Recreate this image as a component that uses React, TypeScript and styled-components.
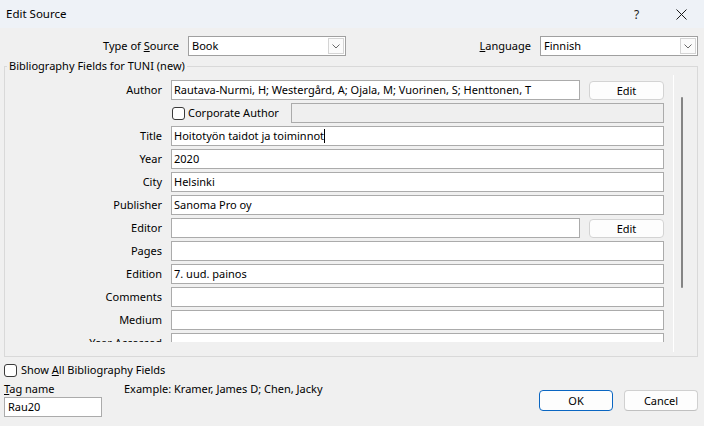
import React from "react";
import styled, { createGlobalStyle } from "styled-components";

const GlobalStyle = createGlobalStyle`
  html, body { margin: 0; padding: 0; background: #f0f0f0; }
  body {
    font-family: "Noto Sans", "Open Sans", sans-serif;
    font-size: 11px;
    color: #000;
  }
  * { box-sizing: border-box; }
`;

const Window = styled.div`
  width: 704px;
  height: 426px;
  background: #f0f0f0;
  display: flex;
  flex-direction: column;
  overflow: hidden;
`;

const TitleBar = styled.div`
  height: 28px;
  flex: none;
  display: flex;
  align-items: center;
  background: #eef2f7;
  padding-left: 6px;
`;

const Title = styled.span`
  flex: 1;
  line-height: 16px;
  font-size: 11.5px;
`;

const CaptionButton = styled.div`
  width: 45px;
  height: 28px;
  display: flex;
  align-items: center;
  justify-content: center;
  font-size: 12px;
  color: #1a1a1a;
`;

const Body = styled.div`
  flex: 1;
  display: flex;
  flex-direction: column;
  padding: 0 6px 0 4px;
`;

const TopRow = styled.div`
  margin-top: 8px;
  height: 20px;
  display: flex;
  align-items: center;
`;

const TopLabel = styled.label<{ $width?: number }>`
  width: ${(p) => (p.$width ? `${p.$width}px` : "auto")};
  text-align: right;
  line-height: 16px;
  margin-right: 9px;
  white-space: nowrap;
`;

const Spacer = styled.div`
  flex: 1;
`;

const Combo = styled.div`
  width: 158px;
  height: 20px;
  border: 1px solid #a0a0a0;
  background: #fff;
  display: flex;
  align-items: stretch;
`;

const ComboText = styled.span`
  flex: 1;
  padding-left: 3px;
  line-height: 18px;
`;

const DropButton = styled.span`
  width: 16px;
  margin: 1px;
  border: 1px solid #d4d4d4;
  background: #fbfbfb;
  display: flex;
  align-items: center;
  justify-content: center;
`;

const Group = styled.fieldset`
  margin: 2px 0 0 0;
  padding: 0;
  border: 1px solid #d9d9d9;
  min-width: 0;
`;

const Legend = styled.legend`
  margin-left: 2px;
  padding: 0 2px;
  line-height: 16px;
`;

const GroupBody = styled.div`
  height: 282px;
  padding-top: 1px;
  display: flex;
`;

const Viewport = styled.div`
  flex: 1;
  height: 267px;
  overflow: hidden;
  padding: 5px 9px 0 0;
  display: flex;
  flex-direction: column;
  gap: 3px;
`;

const ScrollTrack = styled.div`
  width: 24px;
  height: 277px;
  border-left: 1px solid #ffffff;
  padding: 22px 0 0 7px;
`;

const ScrollThumb = styled.div`
  width: 2px;
  height: 191px;
  background: #858585;
  border-radius: 1px;
`;

const FieldRow = styled.div`
  display: grid;
  grid-template-columns: 157px 1fr;
  column-gap: 9px;
  align-items: center;
  height: 20px;
  flex: none;
`;

const FieldLabel = styled.span`
  text-align: right;
  line-height: 16px;
  white-space: nowrap;
`;

const FieldControls = styled.div`
  display: flex;
  align-items: center;
  gap: 9px;
  height: 20px;
`;

const TextBox = styled.div<{ $disabled?: boolean }>`
  flex: 1;
  height: 20px;
  border: 1px solid #ababab;
  background: ${(p) => (p.$disabled ? "#efefef" : "#ffffff")};
  padding-left: 2px;
  line-height: 18px;
  white-space: nowrap;
  overflow: hidden;
`;

const Caret = styled.span`
  display: inline-block;
  width: 1px;
  height: 14px;
  background: #000;
  vertical-align: -3px;
`;

const EditButton = styled.div`
  width: 75px;
  height: 19px;
  border: 1px solid #d3d3d3;
  border-radius: 4px;
  background: #fdfdfd;
  text-align: center;
  line-height: 17px;
`;

const CheckBox = styled.span`
  display: inline-block;
  width: 13px;
  height: 13px;
  border: 1px solid #3a3a3a;
  border-radius: 3px;
  background: #fff;
  flex: none;
`;

const CorporateCheck = styled.div`
  display: flex;
  align-items: center;
  gap: 3px;
  padding-left: 1px;
  width: 111px;
  flex: none;
  line-height: 16px;
  white-space: nowrap;
`;

const ShowAllRow = styled.div`
  margin-top: 6px;
  height: 14px;
  display: flex;
  align-items: center;
  gap: 4px;
  line-height: 16px;
`;

const BottomRow = styled.div`
  display: flex;
  align-items: flex-start;
  margin-top: 4px;
`;

const TagColumn = styled.div`
  width: 98px;
  display: flex;
  flex-direction: column;
`;

const TagLabel = styled.span`
  line-height: 16px;
`;

const TagInput = styled.div`
  height: 20px;
  border: 1px solid #ababab;
  background: #fff;
  padding-left: 3px;
  line-height: 18px;
`;

const Example = styled.span`
  margin-left: 22px;
  line-height: 16px;
  white-space: nowrap;
`;

const DialogButton = styled.div<{ $primary?: boolean }>`
  width: 74px;
  height: 21px;
  margin-top: 9px;
  border: 1px solid ${(p) => (p.$primary ? "#0a66c2" : "#d0d0d0")};
  border-bottom-color: ${(p) => (p.$primary ? "#0a66c2" : "#c0c0c0")};
  border-radius: 4px;
  background: #fdfdfd;
  text-align: center;
  line-height: 19px;
  & + & {
    margin-left: 11px;
  }
`;

const Chevron = () => (
  <svg width="8" height="5" viewBox="0 0 8 5">
    <path d="M0.5 0.5 L4 4 L7.5 0.5" fill="none" stroke="#6a6a6a" strokeWidth="1" />
  </svg>
);

const CloseIcon = () => (
  <svg width="11" height="11" viewBox="0 0 11 11">
    <path d="M0.5 0.5 L10.5 10.5 M10.5 0.5 L0.5 10.5" stroke="#1a1a1a" strokeWidth="1" />
  </svg>
);

type Field = { label: string; value?: string; kind?: "edit" | "caret" };

const fields: Field[] = [
  { label: "Title", value: "Hoitotyön taidot ja toiminnot", kind: "caret" },
  { label: "Year", value: "2020" },
  { label: "City", value: "Helsinki" },
  { label: "Publisher", value: "Sanoma Pro oy" },
  { label: "Editor", value: "", kind: "edit" },
  { label: "Pages", value: "" },
  { label: "Edition", value: "7. uud. painos" },
  { label: "Comments", value: "" },
  { label: "Medium", value: "" },
  { label: "Year Accessed", value: "" },
];

export default function App() {
  return (
    <Window>
      <GlobalStyle />
      <TitleBar>
        <Title>Edit Source</Title>
        <CaptionButton>?</CaptionButton>
        <CaptionButton>
          <CloseIcon />
        </CaptionButton>
      </TitleBar>
      <Body>
        <TopRow>
          <TopLabel $width={175}>
            Type of <u>S</u>ource
          </TopLabel>
          <Combo>
            <ComboText>Book</ComboText>
            <DropButton>
              <Chevron />
            </DropButton>
          </Combo>
          <Spacer />
          <TopLabel>
            <u>L</u>anguage
          </TopLabel>
          <Combo>
            <ComboText>Finnish</ComboText>
            <DropButton>
              <Chevron />
            </DropButton>
          </Combo>
        </TopRow>

        <Group>
          <Legend>Bibliography Fields for TUNI (new)</Legend>
          <GroupBody>
            <Viewport>
              <FieldRow>
                <FieldLabel>Author</FieldLabel>
                <FieldControls>
                  <TextBox>Rautava-Nurmi, H; Westergård, A; Ojala, M; Vuorinen, S; Henttonen, T</TextBox>
                  <EditButton>Edit</EditButton>
                </FieldControls>
              </FieldRow>
              <FieldRow>
                <span />
                <FieldControls>
                  <CorporateCheck>
                    <CheckBox />
                    <span>Corporate Author</span>
                  </CorporateCheck>
                  <TextBox $disabled />
                </FieldControls>
              </FieldRow>
              {fields.map((f) => (
                <FieldRow key={f.label}>
                  <FieldLabel>{f.label}</FieldLabel>
                  <FieldControls>
                    <TextBox>
                      {f.value}
                      {f.kind === "caret" && <Caret />}
                    </TextBox>
                    {f.kind === "edit" && <EditButton>Edit</EditButton>}
                  </FieldControls>
                </FieldRow>
              ))}
            </Viewport>
            <ScrollTrack>
              <ScrollThumb />
            </ScrollTrack>
          </GroupBody>
        </Group>

        <ShowAllRow>
          <CheckBox />
          <span>
            Show <u>A</u>ll Bibliography Fields
          </span>
        </ShowAllRow>
        <BottomRow>
          <TagColumn>
            <TagLabel>
              <u>T</u>ag name
            </TagLabel>
            <TagInput>Rau20</TagInput>
          </TagColumn>
          <Example>Example: Kramer, James D; Chen, Jacky</Example>
          <Spacer />
          <DialogButton $primary>OK</DialogButton>
          <DialogButton>Cancel</DialogButton>
        </BottomRow>
      </Body>
    </Window>
  );
}
